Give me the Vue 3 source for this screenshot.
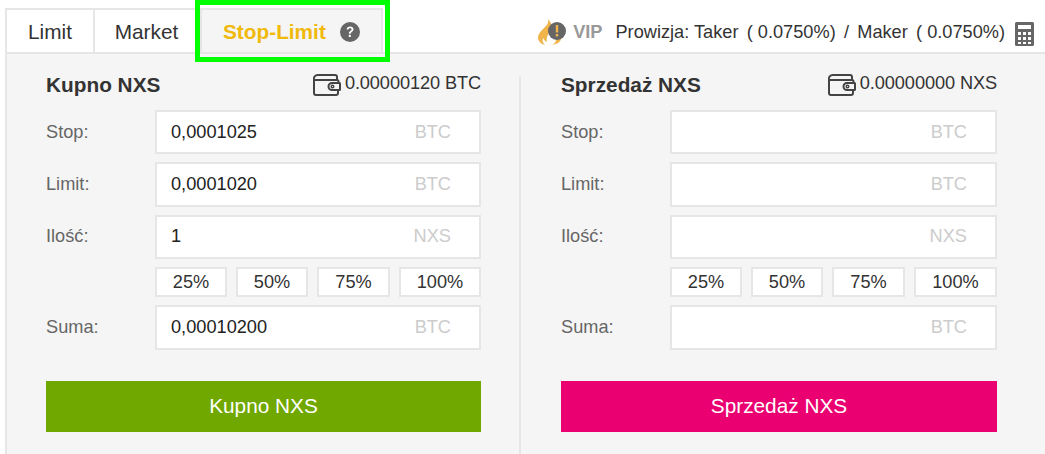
<script setup>
const forms = [
  {
    title: 'Kupno NXS',
    balance: '0.00000120 BTC',
    kind: 'buy',
    fields: [
      { label: 'Stop:', value: '0,0001025', unit: 'BTC' },
      { label: 'Limit:', value: '0,0001020', unit: 'BTC' },
      { label: 'Ilość:', value: '1', unit: 'NXS' },
    ],
    total: '0,00010200',
  },
  {
    title: 'Sprzedaż NXS',
    balance: '0.00000000 NXS',
    kind: 'sell',
    fields: [
      { label: 'Stop:', value: '', unit: 'BTC' },
      { label: 'Limit:', value: '', unit: 'BTC' },
      { label: 'Ilość:', value: '', unit: 'NXS' },
    ],
    total: '',
  },
]
const percents = ['25%', '50%', '75%', '100%']
</script>

<template>
  <main class="app">
    <header class="top">
      <nav class="tabs">
        <div class="tab tab-limit">Limit</div>
        <div class="tab tab-market">Market</div>
        <div class="tab tab-stop">
          <span>Stop-Limit</span>
          <svg class="help" viewBox="0 0 20 20" width="20" height="20">
            <circle cx="10" cy="10" r="10" fill="#666" />
            <path d="M6.600 7.600c.1-2 1.500-3.100 3.500-3.100s3.400 1.100 3.400 2.800c0 1.300-.7 2-1.700 2.600-.9.6-1.100 1-1.100 1.900H8.900c0-1.500.4-2.100 1.500-2.800.8-.5 1.200-.9 1.200-1.500 0-.7-.6-1.200-1.500-1.200s-1.500.5-1.600 1.300z" fill="#fff" />
            <rect x="8.800" y="12.800" width="2" height="2.200" fill="#fff" />
          </svg>
        </div>
      </nav>
      <div class="fees">
        <svg class="vip-icon" viewBox="0 0 30 26" width="30" height="26">
          <path d="M11 0c1 4-1 6-4 9-3 3-6 6-6 10 0 3 3 6 7 7-2-2-3-4-2-7 1 2 2 3 4 4-1-3 0-6 2-9 1-2 3-3 3-6 0-3-2-6-4-8z" fill="#f0b44a" />
          <path d="M19 21c0 2-2 4-4 5 5-1 9-3 9-7 0-1-1-2-1-3z" fill="#f0b44a" />
          <circle cx="20" cy="12" r="9" fill="#666" />
          <rect x="18.800" y="6" width="2.400" height="7.500" fill="#f0b44a" />
          <rect x="18.800" y="15" width="2.400" height="2.400" fill="#f0b44a" />
        </svg>
        <b class="vip">VIP</b>
        <span>Prowizja: Taker</span>
        <span class="gap">( 0.0750%)</span>
        <span class="gap">/</span>
        <span class="gap">Maker</span>
        <span class="gap">( 0.0750%)</span>
        <svg class="calc" viewBox="0 0 19 24" width="19" height="24">
          <path fill-rule="evenodd" fill="#666" d="M1.500 0h16A1.500 1.500 0 0 1 19 1.500v21a1.500 1.500 0 0 1-1.500 1.500h-16A1.500 1.500 0 0 1 0 22.500v-21A1.500 1.500 0 0 1 1.500 0zM3 3v4h13V3zM3 10v3h3v-3zM8 10v3h3v-3zM13 10v3h3v-3zM3 15v3h3v-3zM8 15v3h3v-3zM13 15v3h3v-3zM3 20v2h3v-2zM8 20v2h3v-2zM13 20v2h3v-2z" />
        </svg>
      </div>
    </header>

    <section class="panel">
      <form v-for="form in forms" :key="form.kind" class="form" :class="form.kind" @submit.prevent>
        <div class="form-head">
          <h2>{{ form.title }}</h2>
          <div class="balance">
            <svg viewBox="0 0 28 22" width="28" height="22" fill="none" stroke="#444" stroke-width="2">
              <path d="M5 1h17a2 2 0 0 1 2 2v3" />
              <path d="M1 6V19a2 2 0 0 0 2 2h20a2 2 0 0 0 2-2V16" />
              <path d="M1 6a4 4 0 0 1 4-5M1 6h23a1.500 1.500 0 0 1 1.500 1.500V9" />
              <path d="M19 9h7.500a.500.500 0 0 1 .500.500v6a.500.500 0 0 1-.500.500H19a3.500 3.500 0 0 1 0-7z" />
              <circle cx="19.500" cy="12.500" r="1.300" stroke-width="1.400" />
            </svg>
            <span>{{ form.balance }}</span>
          </div>
        </div>

        <div v-for="field in form.fields" :key="field.label" class="row">
          <label>{{ field.label }}</label>
          <div class="field">
            <span class="value">{{ field.value }}</span>
            <span class="unit">{{ field.unit }}</span>
          </div>
        </div>

        <div class="percents">
          <button v-for="p in percents" :key="p" type="button">{{ p }}</button>
        </div>

        <div class="row">
          <label>Suma:</label>
          <div class="field">
            <span class="value">{{ form.total }}</span>
            <span class="unit">BTC</span>
          </div>
        </div>

        <button type="submit" class="submit">{{ form.title }}</button>
      </form>
    </section>
  </main>
</template>

<style scoped>
.app {
  width: 1045px;
  height: 454px;
  overflow: hidden;
  position: relative;
  padding-top: 8px;
  box-sizing: border-box;
  background: #fff;
  color: #333;
  font-family: "Liberation Sans", Arial, sans-serif;
  font-size: 18.2px;
}

.top {
  display: flex;
  justify-content: space-between;
  height: 44px;
  padding-left: 5px;
}

.tabs {
  display: flex;
}

.tab {
  box-sizing: border-box;
  height: 44px;
  padding-top: 2px;
  border: 2px solid #e6e6e6;
  border-bottom: 0;
  display: flex;
  align-items: center;
  justify-content: center;
  font-size: 20.8px;
}

.tab-limit {
  width: 90px;
}

.tab-market {
  width: 107px;
  margin-left: -2px;
}

.tab-stop {
  position: relative;
  width: 183px;
  padding-left: 21px;
  gap: 14px;
  justify-content: flex-start;
  background: #f5f5f5;
  color: #f0b90b;
  font-weight: 700;
}

.tab-stop::after {
  content: "";
  position: absolute;
  left: -7px;
  right: -9px;
  top: -10px;
  bottom: -10px;
  border: 5px solid #00ff00;
}

.fees {
  display: flex;
  align-items: center;
  padding-top: 4px;
  box-sizing: border-box;
}

.vip-icon {
  margin-right: 6px;
}

.vip {
  color: #999;
  margin-right: 13px;
}

.gap {
  margin-left: 8.250px;
}

.calc {
  margin: 3px 11px 0 10px;
}

.panel {
  box-sizing: border-box;
  height: 402px;
  margin-left: 5px;
  border-top: 2px solid #e6e6e6;
  border-left: 2px solid #e6e6e6;
  background: #f5f5f5;
  display: flex;
}

.form {
  box-sizing: border-box;
  width: 514px;
  padding: 13px 39px 0;
}

.form.buy {
  background: linear-gradient(#e6e6e6, #e6e6e6) no-repeat right 0 top 22px / 2px 100%;
}

.form.sell {
  padding-left: 40px;
  width: 490px;
  padding-right: 0;
}

.form-head {
  display: flex;
  justify-content: space-between;
  align-items: center;
  height: 36px;
  margin-bottom: 7px;
  width: 435px;
}

h2 {
  margin: 0;
  font-size: 20.8px;
  font-weight: 700;
}

.balance {
  display: flex;
  gap: 4px;
  align-items: center;
}

.balance span {
  margin-top: -4px;
  letter-spacing: -0.1px;
}

.row,
.percents,
.submit {
  width: 435px;
}

.sell .row,
.sell .percents,
.sell .submit,
.sell .form-head {
  width: 436px;
}

.row {
  display: flex;
  align-items: center;
  height: 44.400px;
  margin-bottom: 8px;
}

label {
  width: 109px;
  color: #666;
}

.field {
  flex: 1;
  height: 100%;
  box-sizing: border-box;
  border: 2px solid #e6e6e6;
  background: #fff;
  display: flex;
  justify-content: space-between;
  align-items: center;
  padding: 0 28px 0 14px;
}

.value {
  color: #222;
}

.unit {
  color: #ccc;
}

.percents {
  box-sizing: border-box;
  display: grid;
  grid-template-columns: 72px 72px 73px 82px;
  justify-content: end;
  column-gap: 9px;
  height: 30px;
  margin-bottom: 8px;
}

.sell .percents {
  grid-template-columns: 72px 72px 73px 83px;
}

.percents button {
  border: 2px solid #e6e6e6;
  background: #fff;
  color: #333;
  font: inherit;
  padding: 0;
}

.submit {
  display: block;
  height: 51px;
  margin-top: 31.400px;
  border: 0;
  color: #fff;
  font: inherit;
  font-size: 20.8px;
}

.buy .submit {
  background: #70a800;
}

.sell .submit {
  background: #ea0070;
}
</style>
